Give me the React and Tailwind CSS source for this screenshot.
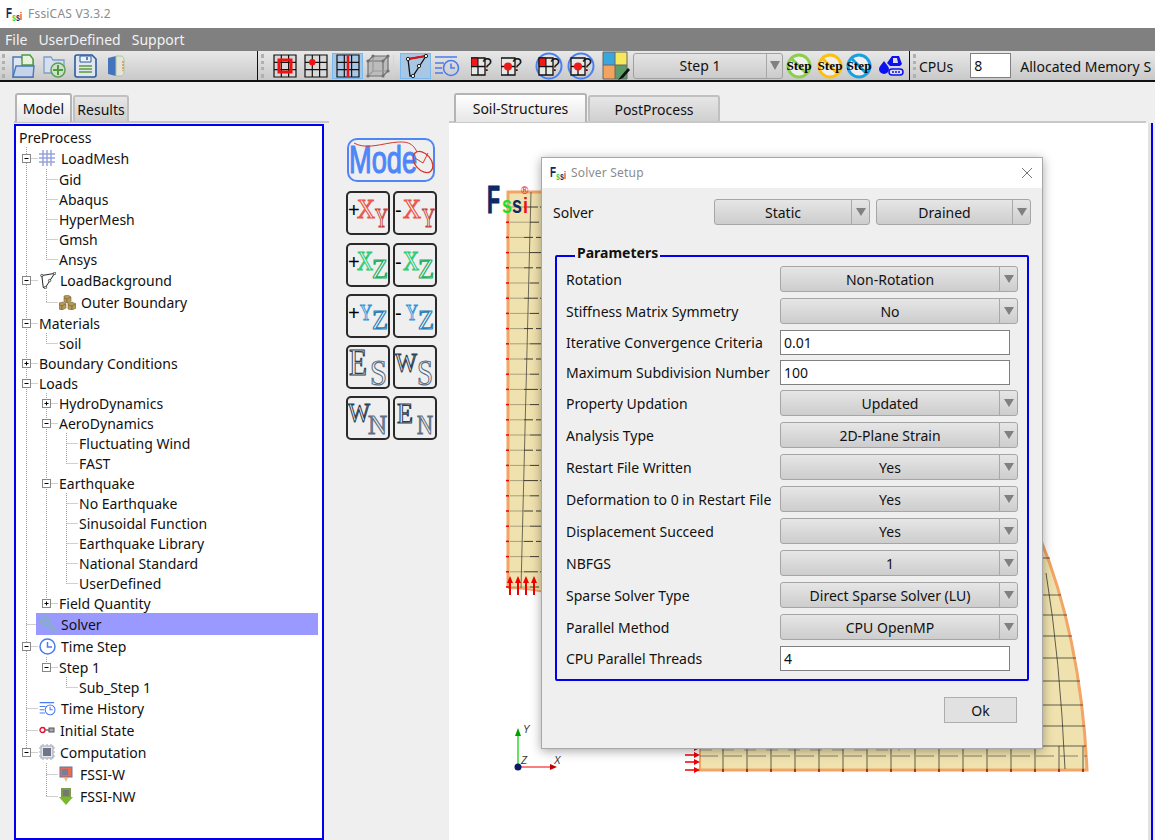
import { Wrench } from "lucide-react";

const GRID = "M1 1h22v22H1zM1 8.3h22M1 15.6h22M8.3 1v22M15.6 1v22";

function Grid({ children, fill = "#d8d8d8" }) {
  return (
    <svg width="24" height="24" viewBox="0 0 24 24">
      <path d={GRID} fill={fill} stroke="#111" strokeWidth="1.2" />
      {children}
    </svg>
  );
}

function Logo() {
  return (
    <svg width="15" height="15" viewBox="0 0 15 15" className="shrink-0 overflow-visible">
      <text x="0" y="11" fontSize="15" fontWeight="700" fontFamily="Liberation Sans" fill="#0b2a66" textLength="6" lengthAdjust="spacingAndGlyphs">F</text>
      <text x="6" y="14" fontSize="10" fontWeight="700" fontFamily="Liberation Sans" fill="#18d830" textLength="4" lengthAdjust="spacingAndGlyphs">s</text>
      <text x="10" y="14" fontSize="10" fontWeight="700" fontFamily="Liberation Sans" fill="#0b2a66" textLength="4" lengthAdjust="spacingAndGlyphs">s</text>
      <text x="14" y="13" fontSize="10" fontWeight="700" fontFamily="Liberation Sans" fill="#e02020" textLength="2" lengthAdjust="spacingAndGlyphs">i</text>
    </svg>
  );
}

function Handle() {
  return <div className="w-[3px] h-[24px] border-l-[3px] border-dotted border-[#b0b0b0] shrink-0" />;
}

function Checked({ children, className }) {
  return (
    <div className={`h-[26px] flex items-center justify-center bg-[#a9c7e2] border border-[#7ab9f0] shrink-0 ${className}`}>
      {children}
    </div>
  );
}

function OpenIcon() {
  return (
    <svg width="23" height="24" viewBox="0 0 23 24">
      <path d="M1 3h8l2 3h10v17H1z" fill="#dfe6f2" stroke="#4a78b8" strokeWidth="1.4" />
      <path d="M10 1l8 0 3 4v6H10z" fill="#e9f2df" stroke="#4f9a44" strokeWidth="1.4" />
      <path d="M1 23l3-11h18l-1 11z" fill="#c5d4ea" stroke="#4a78b8" strokeWidth="1.4" />
    </svg>
  );
}

function AddFolderIcon() {
  return (
    <svg width="23" height="24" viewBox="0 0 23 24">
      <path d="M1 3h7l2 3h11v13H1z" fill="#d5dfee" stroke="#7f9cc8" strokeWidth="1.3" />
      <circle cx="15" cy="16" r="7" fill="#cfe0c8" stroke="#5f9f55" strokeWidth="1.5" />
      <path d="M15 11v10M10 16h10" stroke="#4f9a44" strokeWidth="2" />
    </svg>
  );
}

function SaveIcon() {
  return (
    <svg width="23" height="24" viewBox="0 0 23 24">
      <path d="M3 1h15l4 4v16a2 2 0 0 1-2 2H3a2 2 0 0 1-2-2V3a2 2 0 0 1 2-2z" fill="#dfe6ef" stroke="#2c5aa0" strokeWidth="1.6" />
      <path d="M6 2h11v6H6z" fill="#eef2f7" stroke="#2c5aa0" />
      <path d="M13 3v3" stroke="#2c5aa0" strokeWidth="1.5" />
      <path d="M5 12h13M5 15h13M5 18h13" stroke="#5d9a3c" strokeWidth="1.6" />
    </svg>
  );
}

function BookIcon() {
  return (
    <svg width="20" height="24" viewBox="0 0 20 24">
      <path d="M2 4l8-2v20l-8-2z" fill="#4474bc" />
      <path d="M10 2h5c2 0 3 2 3 4v12c0 2-1 4-3 4h-5z" fill="#e4e4d8" stroke="#a8c8a0" />
      <path d="M17 7v10" stroke="#e08a50" strokeWidth="1.4" strokeDasharray="2 1" />
    </svg>
  );
}

function CubeIcon() {
  return (
    <svg width="24" height="24" viewBox="0 0 24 24" fill="none" stroke="#707070" strokeWidth="1.2">
      <path d="M2 7h15v15H2zM2 7l5-5h15v15l-5 5M17 7l5-5" fill="#bcbcbc" />
      <path d="M7 2v15h15M7 17l-5 5" stroke="#999" />
      <g fill="#707070" stroke="none">
        <circle cx="2" cy="7" r="1.6" /><circle cx="17" cy="7" r="1.6" /><circle cx="22" cy="2" r="1.6" />
        <circle cx="7" cy="2" r="1.6" /><circle cx="2" cy="22" r="1.6" /><circle cx="17" cy="22" r="1.6" /><circle cx="22" cy="17" r="1.6" />
      </g>
    </svg>
  );
}

function PolyIcon({ size = 24, red = true }) {
  return (
    <svg width={size} height={size} viewBox="0 0 24 24" fill="none">
      <path d="M4 5l18-3-13 20H6z" stroke="#111" strokeWidth="1.3" />
      {red && <path d="M4 5l18-3" stroke="#e01010" strokeWidth="2" />}
      <g fill="#eee" stroke="#222">
        <circle cx="4" cy="5" r="1.7" /><circle cx="22" cy="2" r="1.7" /><circle cx="9" cy="22" r="1.7" /><circle cx="15" cy="12" r="1.7" />
      </g>
    </svg>
  );
}

function HistoryIcon({ size = 26 }) {
  return (
    <svg width={size} height={size} viewBox="0 0 26 26" fill="none" stroke="#4a7cf0" strokeWidth="1.6">
      <path d="M1 4h22M1 10h9M1 15h7M1 20h8" />
      <circle cx="17" cy="15" r="7.5" />
      <path d="M17 10.5V15h4" />
    </svg>
  );
}

function QueryIcon({ mode, ring }) {
  return (
    <svg
      width={ring ? 28 : 24}
      height="28"
      viewBox={ring ? "0 0 28 28" : "4 0 24 28"}
      fill="none"
    >
      {ring && <circle cx="14" cy="14" r="12.5" stroke="#4a80f0" strokeWidth="2" />}
      <path d="M4 6h14v17H4zM4 14.500h14M11 14.500v8.500" stroke="#111" strokeWidth="1.3" fill="#e8e8e8" />
      {mode === "cell" && <path d="M4 6h7v8.500H4z" fill="#f01818" stroke="#111" />}
      {mode === "node" && <circle cx="11" cy="14.500" r="4" fill="#f01818" />}
      <text x="15" y="19" fontSize="18" fontFamily="Liberation Sans" fill="#111">?</text>
    </svg>
  );
}

function PaletteIcon() {
  return (
    <svg width="28" height="30" viewBox="0 0 28 30">
      <rect x="1" y="1" width="12" height="13" fill="#3aa6de" />
      <rect x="13" y="1" width="12" height="13" fill="#f7e85c" />
      <rect x="1" y="14" width="12" height="14" fill="#f1a35f" />
      <rect x="13" y="14" width="12" height="14" fill="#5d9b6a" />
      <path d="M1 1h24v27H1zM13 1v27M1 14h24" fill="none" stroke="#666" />
      <path d="M26 17l-7 8-3 4 5-2 7-8z" fill="#111" />
    </svg>
  );
}

function StepIcon({ color }) {
  return (
    <svg width="26" height="26" viewBox="0 0 26 26">
      <circle cx="13" cy="13" r="11" fill="#efefef" stroke={color} strokeWidth="3" />
      <path d="M5 5l16 16" stroke={color} strokeWidth="3" />
      <text x="13" y="17" textAnchor="middle" fontSize="13" fontWeight="700" fontFamily="Liberation Serif" fill="#0a0a0a" textLength="25" lengthAdjust="spacingAndGlyphs">Step</text>
    </svg>
  );
}

function MachineIcon() {
  return (
    <svg width="26" height="24" viewBox="0 0 26 24">
      <path d="M6 7c3 4 5 6 5 8a5 5 0 0 1-10 0c0-2 2-4 5-8z" fill="#0a10f0" />
      <path d="M9 9l5-7h7l3 8-2 2H12z" fill="#0a10f0" />
      <path d="M15 4h4l1 5h-5z" fill="#dde" />
      <rect x="11" y="15" width="14" height="6" rx="3" fill="#dde" stroke="#0a10f0" strokeWidth="1.500" />
      <path d="M14 18h8" stroke="#0a10f0" strokeWidth="1.500" strokeDasharray="2 1" />
    </svg>
  );
}

function Toolbar() {
  return (
    <div className="h-[31px] flex items-center overflow-hidden whitespace-nowrap border-b-2 border-[#111] bg-gradient-to-b from-[#e8e8e8] to-[#c9c9c9]">
      <div className="w-[2px] shrink-0" />
      <Handle />
      <div className="ml-[7px] shrink-0"><OpenIcon /></div>
      <div className="ml-[8px] shrink-0"><AddFolderIcon /></div>
      <div className="ml-[8px] shrink-0"><SaveIcon /></div>
      <div className="ml-[9px] shrink-0"><BookIcon /></div>
      <div className="ml-[131px] w-[1px] h-[30px] bg-[#111] shrink-0" />
      <div className="ml-[3px] shrink-0"><Handle /></div>
      <div className="ml-[9px] shrink-0">
        <Grid><rect x="6" y="6" width="12" height="12" fill="none" stroke="#f01010" strokeWidth="3" /></Grid>
      </div>
      <div className="ml-[7px] shrink-0">
        <Grid><circle cx="8.300" cy="8.300" r="3.200" fill="#f01010" /></Grid>
      </div>
      <Checked className="ml-[4px] w-[31px]">
        <Grid fill="#a9c7e2"><path d="M12 1v22" stroke="#f01010" strokeWidth="2.500" /></Grid>
      </Checked>
      <div className="ml-[3px] shrink-0"><CubeIcon /></div>
      <div className="ml-[3px] mr-[6px] w-[1px] h-[22px] bg-[#d4d4d4] shrink-0" />
      <Checked className="w-[31px]"><PolyIcon /></Checked>
      <div className="ml-[3px] shrink-0"><HistoryIcon /></div>
      <div className="ml-[11px] shrink-0"><QueryIcon mode="cell" /></div>
      <div className="ml-[6px] shrink-0"><QueryIcon mode="node" /></div>
      <div className="ml-[10px] shrink-0"><QueryIcon mode="cell" ring /></div>
      <div className="ml-[4px] shrink-0"><QueryIcon mode="node" ring /></div>
      <div className="ml-[7px] shrink-0"><PaletteIcon /></div>
      <div className="ml-[3px] w-[150px] h-[26px] flex rounded-[3px] border border-[#a0a0a0] bg-gradient-to-b from-[#e4e4e4] to-[#cbcbcb] shrink-0">
        <div className="flex-1 flex items-center justify-center text-[14px]">Step 1</div>
        <div className="w-[16px] border-l border-[#a8a8a8] flex items-center justify-center">
          <div className="w-0 h-0 border-x-[5px] border-x-transparent border-t-[9px] border-t-[#808080]" />
        </div>
      </div>
      <div className="ml-[3px] shrink-0"><StepIcon color="#8ccf4a" /></div>
      <div className="ml-[5px] shrink-0"><StepIcon color="#fcc010" /></div>
      <div className="ml-[3px] shrink-0"><StepIcon color="#1a9fe0" /></div>
      <div className="ml-[6px] shrink-0"><MachineIcon /></div>
      <div className="ml-[5px] w-[1px] h-[30px] bg-[#111] shrink-0" />
      <div className="ml-[3px] shrink-0"><Handle /></div>
      <span className="ml-[3px] mt-[2px] text-[14px]">CPUs</span>
      <div className="ml-[17px] w-[41px] h-[25px] bg-white border border-[#808080] pl-[3px] text-[14px] leading-[23px] shrink-0">8</div>
      <span className="ml-[9px] mt-[2px] text-[14px]">Allocated Memory S</span>
    </div>
  );
}

function MeshIcon() {
  return (
    <svg width="16" height="16" viewBox="0 0 16 16" fill="none" stroke="#98a4dc" strokeWidth="1.500">
      <path d="M0 4h16M0 8h16M0 12h16M4 0v16M8 0v16M12 0v16" />
    </svg>
  );
}

function BricksIcon() {
  return (
    <svg width="17" height="15" viewBox="0 0 17 15">
      <g fill="#b59a58" stroke="#7a6430" strokeWidth=".6">
        <path d="M5 1l4-1 3 2-4 2-3-1z" /><path d="M5 3l3 1v4l-3-1z" /><path d="M12 2v4l-4 2V4z" />
        <path d="M0 8l4-1 3 2-4 2-3-1z" /><path d="M0 10l3 1v4l-3-1z" /><path d="M7 9v4l-4 2v-4z" />
        <path d="M9 8l4-1 4 2-4 2-4-1z" /><path d="M9 10l4 1v4l-4-1z" /><path d="M17 9v4l-4 2v-4z" />
      </g>
    </svg>
  );
}

function ClockIcon() {
  return (
    <svg width="17" height="17" viewBox="0 0 17 17" fill="none" stroke="#4a7cf0" strokeWidth="1.500">
      <circle cx="8.500" cy="8.500" r="7.500" />
      <path d="M8.500 4v5h4.500" />
    </svg>
  );
}

function KeyIcon() {
  return (
    <svg width="16" height="8" viewBox="0 0 16 8" fill="none">
      <circle cx="3.500" cy="4" r="2.500" stroke="#e01030" strokeWidth="1.400" />
      <path d="M6 4h4" stroke="#666" strokeWidth="1.400" />
      <rect x="10" y="2" width="5" height="4" fill="#aaa" stroke="#555" />
    </svg>
  );
}

function ChipIcon() {
  return (
    <svg width="16" height="16" viewBox="0 0 16 16">
      <path d="M4 0v16M8 0v16M12 0v16M0 4h16M0 8h16M0 12h16" stroke="#9aa0b0" strokeDasharray="1 .5" />
      <rect x="2" y="2" width="12" height="12" fill="#e8e8ee" stroke="#9aa0b0" />
      <rect x="4" y="4" width="8" height="8" fill="#6f7488" />
    </svg>
  );
}

function RunWIcon() {
  return (
    <svg width="14" height="17" viewBox="0 0 14 17">
      <rect x="1" y="1" width="12" height="10" fill="#e86a58" stroke="#6a7298" />
      <rect x="3" y="3" width="6" height="6" fill="#777e98" />
      <path d="M5 12h4l-2 4z" fill="#e8c090" />
    </svg>
  );
}

function RunNwIcon() {
  return (
    <svg width="14" height="17" viewBox="0 0 14 17">
      <rect x="2" y="0" width="10" height="10" fill="#7f9a4a" />
      <rect x="4" y="2" width="6" height="6" fill="#6f7a70" />
      <path d="M0 9h14l-7 8z" fill="#7ab82c" />
    </svg>
  );
}

const TREE = [
  { label: "LoadMesh", icon: <MeshIcon />, gap: 22, open: true, children: [
    { label: "Gid" }, { label: "Abaqus" }, { label: "HyperMesh" }, { label: "Gmsh" }, { label: "Ansys" },
  ] },
  { label: "LoadBackground", icon: <PolyIcon size={17} red={false} />, gap: 21, open: true, children: [
    { label: "Outer Boundary", icon: <BricksIcon />, gap: 22 },
  ] },
  { label: "Materials", open: true, children: [{ label: "soil" }] },
  { label: "Boundary Conditions", closed: true },
  { label: "Loads", open: true, children: [
    { label: "HydroDynamics", closed: true },
    { label: "AeroDynamics", open: true, children: [{ label: "Fluctuating Wind" }, { label: "FAST" }] },
    { label: "Earthquake", open: true, children: [
      { label: "No Earthquake" }, { label: "Sinusoidal Function" }, { label: "Earthquake Library" },
      { label: "National Standard" }, { label: "UserDefined" },
    ] },
    { label: "Field Quantity", closed: true },
  ] },
  { label: "Solver", icon: <Wrench size={18} color="#86aecb" strokeWidth={3} className="-scale-x-100" />, gap: 22, selected: true },
  { label: "Time Step", icon: <ClockIcon />, gap: 22, open: true, children: [
    { label: "Step 1", open: true, children: [{ label: "Sub_Step 1" }] },
  ] },
  { label: "Time History", icon: <HistoryIcon size={17} />, gap: 22 },
  { label: "Initial State", icon: <KeyIcon />, gap: 21 },
  { label: "Computation", icon: <ChipIcon />, gap: 21, open: true, children: [
    { label: "FSSI-W", icon: <RunWIcon />, gap: 21 },
    { label: "FSSI-NW", icon: <RunNwIcon />, gap: 21 },
  ] },
];

function flatten(nodes, depth = 0, guides = []) {
  const rows = [];
  nodes.forEach((n, i) => {
    const hasNext = i < nodes.length - 1;
    rows.push({ ...n, depth, guides, hasNext });
    if (n.children) rows.push(...flatten(n.children, depth + 1, [...guides, hasNext]));
  });
  return rows;
}

const ROWS = flatten(TREE);

function TreeRow({ row }) {
  const h = row.icon ? 22 : 20;
  const w = 23 + 20 * row.depth;
  const x = 10.5 + 20 * row.depth;
  const mid = Math.floor(h / 2) + 0.5;
  return (
    <div className="flex items-center text-[14px] text-[#111]" style={{ height: h }}>
      <svg width={w} height={h} className="shrink-0">
        <g stroke="#a0a0a0" strokeDasharray="1 1" fill="none">
          {row.guides.map((on, i) => on && <path key={i} d={`M${10.5 + 20 * i} 0V${h}`} />)}
          <path d={`M${x} 0V${row.hasNext ? h : mid}`} />
          <path d={`M${x} ${mid}H${x + 11}`} />
        </g>
        {(row.open || row.closed) && (
          <g>
            <rect x={x - 4} y={mid - 4} width="8" height="8" fill="#fff" stroke="#888" />
            <path d={`M${x - 2} ${mid}h4`} stroke="#000" />
            {row.closed && <path d={`M${x} ${mid - 2}v4`} stroke="#000" />}
          </g>
        )}
      </svg>
      <div className={`flex-1 h-full flex items-center -ml-[3px] pl-[3px] mr-[4px] ${row.selected ? "bg-[#9999ff]" : ""}`}>
        {row.icon && (
          <div className="shrink-0 flex items-center" style={{ width: row.gap }}>{row.icon}</div>
        )}
        <span>{row.label}</span>
      </div>
    </div>
  );
}

function TabBar({ className, first, second, w1, w2 }) {
  return (
    <div className={`h-[29px] flex items-end border-b-2 border-[#c8c8c8] ${className}`}>
      <div className={`${w1} h-[29px] -mb-[1px] flex items-center justify-center text-[14px] rounded-t-[3px] border-2 border-b-0 border-[#b4b4b4] bg-gradient-to-b from-white to-[#e6e6e6]`}>
        {first}
      </div>
      <div className={`${w2} h-[26px] flex items-center justify-center text-[14px] rounded-t-[3px] border-2 border-b-0 border-[#c0c0c0] bg-gradient-to-b from-[#e6e6e6] to-[#d0d0d0]`}>
        {second}
      </div>
    </div>
  );
}

function Glyph({ g, color }) {
  return (
    <text
      x={g[1]}
      y={g[2]}
      fontSize={g[3]}
      fontFamily="Liberation Serif"
      fill="#f4f4f4"
      stroke={color}
      strokeWidth="1.2"
      textLength={g[4]}
      lengthAdjust="spacingAndGlyphs"
    >
      {g[0]}
    </text>
  );
}

function AxisButton({ sign, a, b, color, color2 }) {
  return (
    <button className="w-[44px] h-[44px] rounded-[5px] border-2 border-[#2a2a2a] bg-[#efefef] shrink-0">
      <svg width="40" height="40" viewBox="0 0 40 40" className="block overflow-visible">
        {sign && <text x="0" y="24" fontSize="20" fontFamily="Liberation Sans" fill="#000">{sign}</text>}
        <Glyph g={a} color={color} />
        <Glyph g={b} color={color2} />
      </svg>
    </button>
  );
}

function ModeButton() {
  return (
    <div className="w-[88px] h-[44px] ml-[1px] rounded-[10px] border-2 border-[#4f86f7]">
      <svg width="84" height="40" viewBox="0 0 84 40" className="block overflow-visible">
        <text x="0" y="33" fontSize="39" fontFamily="Liberation Sans" fill="#4f86f7" stroke="#4f86f7" strokeWidth="1.200" textLength="68" lengthAdjust="spacingAndGlyphs">Mode</text>
        <path d="M5 3c10 6 24 2 36 0 14-2 22-2 27 9" fill="none" stroke="#d8342c" />
        <ellipse cx="74" cy="22" rx="8" ry="12" transform="rotate(-40 74 22)" fill="none" stroke="#d8342c" strokeWidth="1.200" />
        <path d="M66 18l8 5 5-10" fill="none" stroke="#d8342c" />
      </svg>
    </div>
  );
}

function ToolColumn() {
  const red = ["#e8574a", "#c8443c"];
  const green = ["#2ecc71", "#27ae60"];
  const blue = ["#3498db", "#2980b9"];
  const slate = ["#2c3e50", "#5d7085"];
  const pairs = [
    [
      ["+", ["X", 9, 25, 27, 18], ["Y", 27, 34, 27, 13], red],
      ["-", ["X", 8, 25, 27, 18], ["Y", 27, 34, 27, 13], red],
    ],
    [
      ["+", ["X", 9, 25, 27, 16], ["Z", 24, 33, 27, 16], green],
      ["-", ["X", 8, 25, 27, 16], ["Z", 23, 33, 27, 16], green],
    ],
    [
      ["+", ["Y", 12, 24, 24, 12], ["Z", 24, 33, 27, 16], blue],
      ["-", ["Y", 11, 24, 24, 12], ["Z", 23, 33, 27, 16], blue],
    ],
    [
      ["", ["E", 1, 28, 38, 18], ["S", 22, 38, 36, 17], slate],
      ["", ["W", 0, 25, 28, 22], ["S", 22, 38, 36, 16], slate],
    ],
    [
      ["", ["W", 0, 24, 28, 22], ["N", 20, 36, 27, 19], slate],
      ["", ["E", 2, 25, 30, 16], ["N", 22, 36, 27, 16], slate],
    ],
  ];
  return (
    <div className="w-[120px] shrink-0 pl-[17px] pt-[56px] flex flex-col">
      <ModeButton />
      <div className="mt-[9px] flex flex-col gap-[7px]">
        {pairs.map((p, i) => (
          <div key={i} className={`flex gap-[3px] ${i === 0 ? "mb-[1px]" : ""}`}>
            {p.map((c) => (
              <AxisButton key={c[0] + c[1][0] + c[2][0]} sign={c[0]} a={c[1]} b={c[2]} color={c[3][0]} color2={c[3][1]} />
            ))}
          </div>
        ))}
      </div>
    </div>
  );
}

function MeshDrawing() {
  const rows = Array.from({ length: 26 }, (_, i) => 209 + i * 15.2);
  const bands = Array.from({ length: 16 }, (_, i) => 723 + i * 24);
  const arcRows = [
    [560, 1042, 1050], [597, 1042, 1061], [617, 1042, 1067], [638, 1042, 1072], [660, 1042, 1076],
    [683, 1042, 1080], [707, 1042, 1083], [728, 1042, 1085], [748, 1042, 1086],
  ];
  return (
    <svg className="absolute inset-0" width="697" height="715" viewBox="449 125 697 715">
      <path d="M508 194H600V590Q560 594 508 590z" fill="#f0e2ae" />
      <path d="M508 590V194H600" fill="none" stroke="#f2a566" strokeWidth="3" />
      <path d="M508 590Q525 590 545 594" fill="none" stroke="#f2a566" strokeWidth="2" />
      {rows.map((y, i) => (
        <g key={y}>
          <path d={`M510 ${y}H${i % 2 ? 530 : 524}`} stroke="#8a8468" strokeWidth=".7" />
          <path d={`M${i % 2 ? 530 : 524} ${y}H545`} stroke="#111" strokeWidth=".8" strokeDasharray={i % 3 ? "9 3" : "14 2"} />
          <path d={`M506 ${y}h3`} stroke="#f00000" strokeWidth="1.500" />
        </g>
      ))}
      <path d="M531 194L521 590" stroke="#333" strokeWidth=".7" />
      {[510, 518, 526, 534].map((x) => (
        <g key={x} stroke="#f00000" fill="#f00000">
          <path d={`M${x} 597V583`} strokeWidth="2" />
          <path d={`M${x - 3} 585L${x} 578L${x + 3} 585z`} stroke="none" />
        </g>
      ))}

      <path d="M700 740H1040V540C1065 600 1083 680 1087 772H700z" fill="#f0e2ae" />
      <path d="M1040 540C1065 600 1083 680 1087 772H698" fill="none" stroke="#f2a566" strokeWidth="3" />
      <path d="M700 748V772" stroke="#f2a566" strokeWidth="2" />
      {bands.map((x) => (
        <g key={x}>
          <path d={`M${x} 748V771`} stroke="#222" strokeWidth=".7" />
          <path d={`M${x} 771v3`} stroke="#a00000" strokeWidth="1.500" />
        </g>
      ))}
      <path d="M700 758H1087" stroke="#444" strokeWidth=".6" strokeDasharray="18 6" />
      <path d="M700 752H900" stroke="#666" strokeWidth=".5" strokeDasharray="12 10" />
      <path d="M1046 575Q1060 660 1065 771" fill="none" stroke="#222" strokeWidth=".7" />
      {arcRows.map((r) => (
        <path key={r[0]} d={`M${r[1]} ${r[0]}H${r[2]}`} stroke="#222" strokeWidth=".7" />
      ))}
      {[750, 757, 764, 772].map((y) => (
        <g key={y} fill="#f00000" stroke="#f00000">
          <path d={`M685 ${y}H695`} strokeWidth="1.500" />
          <path d={`M694 ${y - 3}L700 ${y}L694 ${y + 3}z`} stroke="none" />
        </g>
      ))}

      <text x="487" y="215" fontSize="38" fontWeight="700" fontFamily="Liberation Sans" fill="#0b2a66" stroke="#0b2a66" textLength="13" lengthAdjust="spacingAndGlyphs">F</text>
      <text x="502" y="215" fontSize="24" fontWeight="700" fontFamily="Liberation Sans" fill="#18e030" textLength="10" lengthAdjust="spacingAndGlyphs">s</text>
      <text x="512" y="215" fontSize="24" fontWeight="700" fontFamily="Liberation Sans" fill="#0b2a66" textLength="10" lengthAdjust="spacingAndGlyphs">s</text>
      <text x="523" y="215" fontSize="22" fontWeight="700" fontFamily="Liberation Sans" fill="#f01010" textLength="5" lengthAdjust="spacingAndGlyphs">i</text>
      <text x="521" y="196" fontSize="10" fontFamily="Liberation Sans" fill="#f01010">®</text>

      <path d="M518 769V735" stroke="#00d000" strokeWidth="1.200" />
      <path d="M515 738L518 730L521 738z" fill="#00a000" />
      <path d="M518 769H552" stroke="#f00000" strokeWidth="1.200" />
      <path d="M550 766L557 769L550 772z" fill="#c00000" />
      <circle cx="518" cy="769" r="3.500" fill="#0b1a66" />
      <text x="523" y="735" fontSize="10" fontStyle="italic" fontFamily="Liberation Sans" fill="#333">Y</text>
      <text x="521" y="766" fontSize="10" fontStyle="italic" fontFamily="Liberation Sans" fill="#333">Z</text>
      <text x="554" y="766" fontSize="10" fontStyle="italic" fontFamily="Liberation Sans" fill="#333">X</text>
    </svg>
  );
}

function Combo({ value, className = "" }) {
  return (
    <div className={`h-[26px] flex rounded-[3px] border border-[#a6a6a6] bg-gradient-to-b from-[#e6e6e6] to-[#cdcdcd] ${className}`}>
      <div className="flex-1 flex items-center justify-center text-[14px] text-[#111]">{value}</div>
      <div className="w-[18px] border-l border-[#a8a8a8] flex items-center justify-center">
        <div className="w-0 h-0 border-x-[5px] border-x-transparent border-t-[8px] border-t-[#808080]" />
      </div>
    </div>
  );
}

const PARAMS = [
  { label: "Rotation", value: "Non-Rotation", h: 32 },
  { label: "Stiffness Matrix Symmetry", value: "No", h: 32 },
  { label: "Iterative Convergence Criteria", input: "0.01", h: 30 },
  { label: "Maximum Subdivision Number", input: "100", h: 30 },
  { label: "Property Updation", value: "Updated", h: 32 },
  { label: "Analysis Type", value: "2D-Plane Strain", h: 32 },
  { label: "Restart File Written", value: "Yes", h: 32 },
  { label: "Deformation to 0 in Restart File", value: "Yes", h: 32 },
  { label: "Displacement Succeed", value: "Yes", h: 32 },
  { label: "NBFGS", value: "1", h: 32 },
  { label: "Sparse Solver Type", value: "Direct Sparse Solver (LU)", h: 32 },
  { label: "Parallel Method", value: "CPU OpenMP", h: 32 },
  { label: "CPU Parallel Threads", input: "4", h: 25 },
];

function SolverDialog() {
  return (
    <div className="absolute left-[541px] top-[157px] w-[502px] h-[592px] bg-[#efefef] border border-[#a8a8a8] shadow-[0_2px_10px_rgba(0,0,0,0.35)] text-[14px] text-[#111]">
      <div className="h-[30px] bg-white flex items-center pl-[8px] pr-[9px]">
        <Logo />
        <span className="ml-[6px] text-[12px] text-[#8c8c8c] tracking-[0.2px]">Solver Setup</span>
        <svg width="12" height="12" viewBox="0 0 12 12" className="ml-auto" fill="none" stroke="#777">
          <path d="M1 1l10 10M11 1L1 11" />
        </svg>
      </div>
      <div className="mt-[11px] ml-[11px] flex items-center">
        <span className="w-[161px]">Solver</span>
        <Combo value="Static" className="w-[156px]" />
        <Combo value="Drained" className="ml-[6px] w-[155px]" />
      </div>
      <div className="relative mt-[30px] ml-[13px] w-[474px] h-[426px] border-2 border-[#0000ee] rounded-[2px] pl-[9px] pt-[9px]">
        <span className="absolute left-[18px] -top-[14px] bg-[#efefef] px-[2px] font-bold leading-[20px]">Parameters</span>
        {PARAMS.map((p) => (
          <div key={p.label} className="flex items-start" style={{ height: p.h }}>
            <span className={`w-[214px] shrink-0 whitespace-nowrap ${p.input ? "leading-[25px]" : "leading-[28px]"}`}>{p.label}</span>
            {p.input ? (
              <div className="w-[230px] h-[25px] bg-white border border-[#808080] pl-[3px] leading-[23px]">{p.input}</div>
            ) : (
              <Combo value={p.value} className="w-[238px]" />
            )}
          </div>
        ))}
      </div>
      <div className="mt-[16px] ml-[402px] w-[73px] h-[26px] flex items-center justify-center bg-[#e1e1e1] border border-[#adadad]">Ok</div>
    </div>
  );
}

export default function App() {
  return (
    <div className="relative w-[1155px] h-[840px] overflow-hidden bg-[#efefef] text-[#111] font-['Noto_Sans','Liberation_Sans',sans-serif]">
      <div className="h-[28px] bg-white flex items-center pl-[6px]">
        <Logo />
        <span className="ml-[7px] text-[12px] text-[#8c8c8c] tracking-[0.2px]">FssiCAS V3.3.2</span>
      </div>
      <div className="h-[23px] bg-[#808080] flex items-center pl-[5px] gap-[11px] text-[14px] text-[#f2f2f2]">
        <span>File</span>
        <span>UserDefined</span>
        <span>Support</span>
      </div>
      <Toolbar />
      <div className="flex h-[758px]">
        <div className="w-[329px] shrink-0 pl-[14px] pt-[12px] flex flex-col">
          <TabBar first="Model" second="Results" w1="w-[57px] mr-[1px]" w2="w-[56px]" className="pl-[1px]" />
          <div className="mt-[1px] w-[310px] flex-1 border-2 border-[#0000ee] bg-white pt-px overflow-hidden">
            <div className="h-[20px] pl-[3px] flex items-center text-[14px]">PreProcess</div>
            {ROWS.map((r) => (
              <TreeRow key={r.label + r.depth} row={r} />
            ))}
          </div>
        </div>
        <ToolColumn />
        <div className="flex-1 pt-[12px] flex flex-col">
          <TabBar first="Soil-Structures" second="PostProcess" w1="w-[133px] mr-[1px]" w2="w-[132px]" className="pl-[5px] mr-[9px]" />
          <div className="flex-1 flex">
            <div className="relative flex-1 bg-white">
              <MeshDrawing />
            </div>
            <div className="w-[3px] bg-[#e2e2e2]" />
            <div className="w-[2px] bg-[#0000ee]" />
            <div className="w-[2px]" />
          </div>
        </div>
      </div>
      <SolverDialog />
    </div>
  );
}
